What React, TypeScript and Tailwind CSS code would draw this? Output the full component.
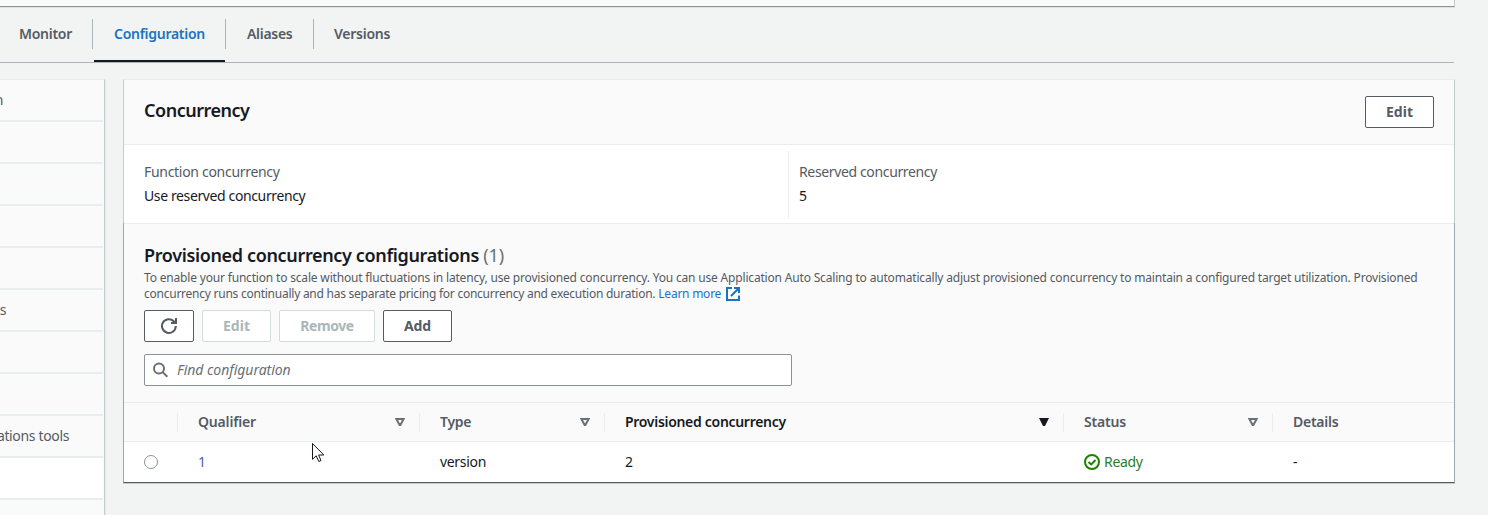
import type { ReactNode } from "react";

const FONT = "font-['Noto_Sans','Open_Sans',sans-serif]";

function Tab({ label, active, className }: { label: string; active?: boolean; className: string }) {
  return (
    <div className={`flex h-[56px] flex-col ${className}`}>
      <span className={`mt-[17px] whitespace-nowrap text-[14px] leading-5 font-semibold ${active ? "text-[#1a73c0]" : "text-[#545b64]"}`}>
        {label}
      </span>
    </div>
  );
}

function TabDivider() {
  return <div className="mt-[12px] h-[30px] w-px shrink-0 bg-[#aab7b8]" />;
}

function Button({ children, disabled, className }: { children: ReactNode; disabled?: boolean; className: string }) {
  return (
    <button
      className={`flex h-8 shrink-0 items-center justify-center rounded-[2px] border bg-white text-[14px] leading-5 font-bold ${
        disabled ? "border-[#d5dbdb] text-[#aab7b8]" : "border-[#545b64] text-[#545b64]"
      } ${className}`}
    >
      {children}
    </button>
  );
}

function SortIcon({ filled }: { filled?: boolean }) {
  return (
    <svg width="10" height="8" viewBox="0 0 10 8" className="shrink-0">
      {filled ? (
        <path d="M0 0H10L6 8H4Z" fill="#16191f" />
      ) : (
        <path d="M1.4 1H8.6L5.4 7H4.6Z" fill="none" stroke="#687078" strokeWidth="2" />
      )}
    </svg>
  );
}

function HeaderCell({ label, className, sort, tracking, strong }: { label: string; className: string; tracking: string; sort?: "idle" | "active"; strong?: boolean }) {
  return (
    <div className={`flex h-[38px] shrink-0 items-center ${className}`}>
      <div className="h-[19px] w-px bg-[#eaeded]" />
      <div className="flex flex-1 items-center justify-between pr-[14px] pl-5">
        <span className={`whitespace-nowrap text-[14px] leading-5 font-semibold ${tracking} ${strong ? "text-[#16191f]" : "text-[#545b64]"}`}>{label}</span>
        {sort && <SortIcon filled={sort === "active"} />}
      </div>
    </div>
  );
}

const sidebar = [
  { text: "General configuration" },
  { text: "" },
  { text: "" },
  { text: "" },
  { text: "" },
  { text: "Environment variables" },
  { text: "" },
  { text: "" },
  { text: "Monitoring and operations tools" },
  { text: "", selected: true },
  { text: "" },
];

const ends = ["right-[100px]", "", "", "", "", "right-[97px]", "", "", "right-[34px]", "", ""];

export default function App() {
  return (
    <div className={`relative h-[515px] w-[1488px] overflow-hidden bg-[#f2f3f3] text-[14px] text-[#16191f] ${FONT}`}>
      <div className="h-[7px] w-[1455px] border-r border-b border-r-[#c3cbcc] border-b-[#879596] bg-[#fafafa] shadow-[0_1px_0_#dde1e1]" />

      <nav className="flex h-[56px] w-[1454px] border-b border-[#aab7b8]">
        <Tab label="Monitor" className="w-[92px] pl-[19px] tracking-[-0.28px]" />
        <TabDivider />
        <div className="ml-px h-[55px] w-[131px] border-b-2 border-[#16191f]">
          <Tab label="Configuration" active className="pl-[20px] tracking-[-0.28px]" />
        </div>
        <TabDivider />
        <Tab label="Aliases" className="w-[87px] pl-[21px] tracking-[-0.3px]" />
        <TabDivider />
        <Tab label="Versions" className="pl-[20px] tracking-[-0.25px]" />
      </nav>

      <div className="flex pt-4">
        <aside className="h-[436px] w-[105px] shrink-0 overflow-hidden border-t border-r border-t-[#eaeded] border-r-[#c3cbcc] bg-[#fafafa] shadow-[1px_0_0_#e6eaea]">
          {sidebar.map((item, i) => (
            <div key={i} className={`relative mr-px h-[42px] border-b-2 border-[#eaeded] ${item.selected ? "bg-white" : ""}`}>
              {item.text && (
                <span className={`absolute top-[10px] whitespace-nowrap text-[14px] leading-5 tracking-[-0.35px] text-[#545b64] ${ends[i]}`}>{item.text}</span>
              )}
            </div>
          ))}
        </aside>

        <main className="ml-[18px] w-[1332px]">
          <section className="border-x border-t border-x-[#c3cbcc] border-t-[#eaeded] bg-white">
            <header className="flex h-[65px] items-start justify-between border-b border-[#eaeded] bg-[#fafafa] pt-4 pr-5 pl-5">
              <h2 className="mt-[3px] text-[18px] leading-[22px] font-semibold tracking-[-0.48px]">Concurrency</h2>
              <Button className="w-[69px]">Edit</Button>
            </header>
            <div className="flex h-[78px] leading-6">
              <dl className="w-[664px] pt-[15px] pl-5">
                <dt className="tracking-[-0.3px] text-[#545b64]">Function concurrency</dt>
                <dd className="tracking-[-0.38px]">Use reserved concurrency</dd>
              </dl>
              <div className="mt-[6px] h-[67px] w-px bg-[#eaeded]" />
              <dl className="pt-[15px] pl-[10px]">
                <dt className="tracking-[-0.36px] text-[#545b64]">Reserved concurrency</dt>
                <dd>5</dd>
              </dl>
            </div>
          </section>

          <section className="border-x border-b border-x-[#9ba7ab] border-b-[#545b64] bg-white shadow-[0_1px_0_#c3cbcc]">
            <header className="h-[180px] border-y border-[#eaeded] bg-[#fafafa] px-5 pt-5">
              <h2 className="text-[18px] leading-[22px] font-semibold tracking-[-0.35px]">
                Provisioned concurrency configurations <span className="font-normal tracking-[-0.1px] text-[#687078]">(1)</span>
              </h2>
              <div className="mt-[4px] text-[12px] leading-4 whitespace-nowrap text-[#545b64]">
                <p className="tracking-[-0.178px]">
                  To enable your function to scale without fluctuations in latency, use provisioned concurrency. You can use Application Auto Scaling to automatically adjust provisioned concurrency to maintain a configured target utilization. Provisioned
                </p>
                <p className="flex items-center tracking-[-0.245px]">
                  <span className="mr-[3px]">concurrency runs continually and has separate pricing for concurrency and execution duration.</span>
                  <a className="text-[#1a73c0]">Learn more</a>
                  <svg width="14" height="14" viewBox="0 0 14 14" fill="none" stroke="#1a73c0" strokeWidth="2" className="ml-[5px]">
                    <path d="M6 1H1V13H13V8.5M8 1H13V6M13 1L5 9" />
                  </svg>
                </p>
              </div>
              <div className="mt-2 flex">
                <Button className="w-[50px]">
                  <svg width="16" height="16" viewBox="0 0 16 16" fill="none" stroke="#545b64" strokeWidth="2">
                    <path d="M14.8 8A6.9 6.9 0 1 1 12.8 3.2L15 5.2" />
                    <path d="M15 0V5H10" />
                  </svg>
                </Button>
                <Button disabled className="ml-2 w-[69px]">Edit</Button>
                <Button disabled className="ml-2 w-[96px] tracking-[-0.4px]">Remove</Button>
                <Button className="ml-2 w-[69px] tracking-[-0.2px]">Add</Button>
              </div>
              <div className="mt-3 flex h-8 w-[648px] items-center rounded-[2px] border border-[#879596] bg-white pl-2">
                <svg width="16" height="16" viewBox="0 0 16 16" fill="none" stroke="#687078" strokeWidth="2">
                  <circle cx="6" cy="6.5" r="5" />
                  <path d="M9.7 10.1L14.3 14.7" />
                </svg>
                <span className="ml-2 leading-5 tracking-[-0.03px] text-[#687078] italic">Find configuration</span>
              </div>
            </header>

            <div className="flex h-[39px] border-b border-[#eaeded] bg-[#fafafa] pl-[53px]">
              <HeaderCell label="Qualifier" sort="idle" tracking="tracking-[-0.18px]" className="w-[242px]" />
              <HeaderCell label="Type" sort="idle" tracking="tracking-[-0.3px]" className="w-[185px]" />
              <HeaderCell label="Provisioned concurrency" sort="active" strong tracking="tracking-[-0.3px]" className="w-[459px]" />
              <HeaderCell label="Status" sort="idle" tracking="tracking-[-0.2px]" className="w-[209px]" />
              <HeaderCell label="Details" tracking="tracking-[-0.25px]" className="w-[182px]" />
            </div>
            <div className="flex h-[40px] items-center leading-5 tracking-[-0.32px]">
              <div className="w-[74px] pl-5">
                <div className="h-[14px] w-[14px] rounded-full border border-[#879596] bg-white" />
              </div>
              <div className="w-[242px] text-[#4a5fb5]">1</div>
              <div className="w-[185px]">version</div>
              <div className="w-[459px]">2</div>
              <div className="flex w-[209px] items-center text-[#2b7d2b]">
                <svg width="16" height="16" viewBox="0 0 16 16" fill="none" stroke="#1d8102" strokeWidth="2" className="mr-1">
                  <circle cx="8" cy="8" r="7" />
                  <path d="M4.5 8L7.2 10.4L11.5 6" />
                </svg>
                Ready
              </div>
              <div>-</div>
            </div>
          </section>
        </main>
      </div>

      <svg width="13" height="20" viewBox="0 0 13 20" className="absolute top-[443px] left-[312px]">
        <path d="M.5 .5V16.3L4.2 12.8L6.8 18.5L9 17.5L6.6 12H11.8Z" fill="#fff" stroke="#16191f" />
      </svg>
    </div>
  );
}
